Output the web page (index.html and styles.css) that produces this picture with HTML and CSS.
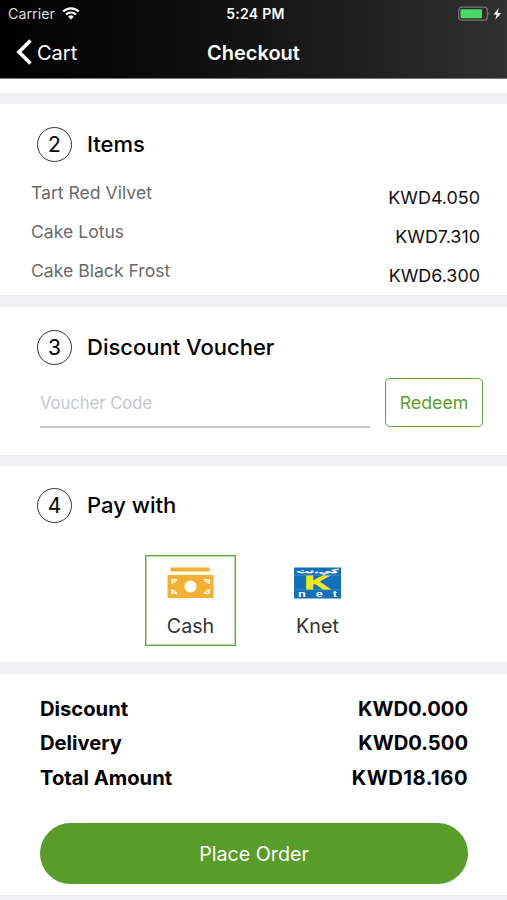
FILE: index.html
```html
<!DOCTYPE html>
<html lang="en">
<head>
<meta charset="utf-8">
<title>Checkout</title>
<link rel="stylesheet" href="styles.css">
</head>
<body>
<header class="topbar">
  <div class="status">
    <div class="carrier"><span>Carrier</span>
      <svg class="wifi" width="18" height="13" viewBox="0 0 18 13"><g fill="none" stroke="#fff" stroke-width="2.1"><path d="M1.2 4.6a11 11 0 0 1 15.6 0"/><path d="M4 7.500a7.100 7.100 0 0 1 10 0"/></g><path d="M9 12.500L6.100 9.700a4.200 4.200 0 0 1 5.800 0z" fill="#fff"/></svg>
    </div>
    <div class="time">5:24 PM</div>
    <div class="power">
      <svg width="44" height="16" viewBox="0 0 44 16"><rect x=".7" y="1.200" width="28.600" height="13" rx="3" fill="none" stroke="#777" stroke-width="1.200"/><rect x="2.500" y="3.200" width="21.500" height="9" rx="1" fill="#4cd964"/><path d="M30.700 5.500q1.700 2.200 0 4.500z" fill="#777"/><path d="M40.800 2L35.500 8.600h3.300L37.200 13.800 43.200 6.900H39.700z" fill="#fff"/></svg>
    </div>
  </div>
  <nav class="nav">
    <a class="back"><svg width="16" height="27" viewBox="0 0 16 27"><path d="M14.500 1.500L3 13 14.500 24.500" fill="none" stroke="#fff" stroke-width="3.700"/></svg><span>Cart</span></a>
    <h1>Checkout</h1>
  </nav>
</header>
<main>
  <section class="items">
    <h2><b>2</b><span>Items</span></h2>
    <div class="row"><span>Tart Red Vilvet</span><em>KWD4.050</em></div>
    <div class="row"><span>Cake Lotus</span><em>KWD7.310</em></div>
    <div class="row"><span>Cake Black Frost</span><em>KWD6.300</em></div>
  </section>
  <section class="voucher">
    <h2><b>3</b><span>Discount Voucher</span></h2>
    <div class="redeem-row">
      <div class="field"><span>Voucher Code</span></div>
      <button class="redeem"><span>Redeem</span></button>
    </div>
  </section>
  <section class="pay">
    <h2><b>4</b><span>Pay with</span></h2>
    <div class="methods">
      <div class="method selected">
        <svg width="47" height="32" viewBox="0 0 47 32"><path d="M4.500 .5h37q1 0 1 1v2q0 1-1 1h-37q-1 0-1-1v-2q0-1 1-1zM1 8h45q.5 0 .5.500v22q0 .5-.5.500H1q-.5 0-.5-.500v-22Q.5 8 1 8z" fill="#f2b034"/><circle cx="23.500" cy="19.500" r="6" fill="#fff"/><path d="M4 12h6.500q-1.500 4-6.500 5zM43 12h-6.500q1.500 4 6.500 5zM4 27h6.500q-1.500-4-6.500-5zM43 27h-6.500q1.500-4 6.500-5z" fill="#fff"/><path d="M5.500 12.500l3 3M41.500 12.500l-3 3M5.500 26.500l3-3M41.500 26.500l-3-3" stroke="#f2b034" stroke-width="1"/></svg>
        <span>Cash</span>
      </div>
      <div class="method">
        <svg width="47" height="32" viewBox="0 0 47 32"><rect width="47" height="31" y=".5" fill="#1270b8"/><path d="M0 8.300h47M0 22.800h47" stroke="#4b94c8" stroke-width=".7"/><text class="arabic" transform="translate(23.500 6) scale(1.900 .85)" text-anchor="middle">كي.نت</text><text class="k" transform="translate(23 21.800) scale(1.950 1)" text-anchor="middle">K</text><text class="net" transform="translate(4 29.600) scale(1.350 1)" textLength="29" lengthAdjust="spacing">net</text></svg>
        <span>Knet</span>
      </div>
    </div>
  </section>
  <section class="summary">
    <dl>
      <div><dt>Discount</dt><dd>KWD0.000</dd></div>
      <div><dt>Delivery</dt><dd>KWD0.500</dd></div>
      <div><dt>Total Amount</dt><dd class="total">KWD18.160</dd></div>
    </dl>
    <button class="place"><span>Place Order</span></button>
  </section>
</main>
</body>
</html>
```
FILE: styles.css
```css
* { box-sizing: border-box; }
body { margin: 0; height: 900px; overflow: hidden; background: #efeff4; font-family: Inter, "Liberation Sans", sans-serif; color: #000; }
.topbar { height: 79px; background: linear-gradient(90deg, #000, #111 45%, #303030); color: #fff; border-bottom: 1px solid #777; }
.status { display: grid; grid-template-columns: 1fr auto 1fr; align-items: center; height: 27px; font-size: 14.300px; line-height: 27px; }
.carrier { display: flex; align-items: center; gap: 7px; padding-left: 8px; color: #ddd; }
.time { padding-left: 4px; font-weight: 600; font-size: 14px; letter-spacing: .3px; }
.power { display: flex; justify-content: flex-end; padding-right: 5px; }
.nav { display: grid; grid-template-columns: 1fr auto 1fr; height: 51px; align-items: center; }
.back { display: flex; align-items: center; gap: 5px; padding-left: 16px; font-size: 20px; }
h1 { margin: 0; font-size: 20px; font-weight: 600; }
main { display: flex; flex-direction: column; gap: 11.500px; padding-top: 25px; background: linear-gradient(#fff 0 14px, #efeff4 14px); }
section { background: #fff; }
h2 { display: flex; align-items: center; gap: 15px; margin: 0; padding-left: 37px; height: 35px; font-size: 22px; font-weight: 500; }
h2 span { padding-bottom: 1px; }
h2 b { display: flex; align-items: center; justify-content: center; width: 35px; height: 35px; border: 1.500px solid #333; border-radius: 50%; font-size: 21px; font-weight: 400; }
.items { height: 191px; padding-top: 23px; }
.items h2 { margin-bottom: 20px; }
.row { display: flex; justify-content: space-between; height: 39px; padding: 0 27px 0 31px; font-size: 17.600px; line-height: 22px; }
.row span { color: #6a6a6a; }
.row em { font-style: normal; font-size: 17.900px; padding-top: 5px; color: #111; }
.voucher { height: 148px; padding-top: 23px; }
.redeem-row { display: flex; gap: 15px; margin: 13px 24px 0 40px; }
.field { flex: 1; height: 50px; padding-top: 14px; border-bottom: 2px solid #c4c4c4; color: #c7c7cc; font-size: 16.600px; line-height: 22px; }
button { font-family: inherit; padding: 0; }
.redeem { width: 98px; height: 49px; border: 1.500px solid #5fa63a; border-radius: 5px; background: #fff; color: #5a9e2b; font-size: 17.800px; }
.pay { height: 196px; padding-top: 22px; }
.methods { display: flex; gap: 36px; margin: 32px 0 0 145px; }
.method { display: flex; flex-direction: column; align-items: center; width: 91px; height: 91px; padding-top: 11px; border: 1px solid transparent; color: #333; font-size: 19.700px; line-height: 24px; }
.method span { margin-top: 15px; }
.method.selected { border: 1px solid #62a83e; box-shadow: inset 0 0 0 1px #b9dba6; }
.arabic { font: bold 6.500px "DejaVu Sans", sans-serif; fill: #fff; stroke: #fff; stroke-width: .3px; }
.k { font: bold 17.500px "Liberation Sans", sans-serif; fill: #f5e51b; stroke: #f5e51b; stroke-width: 1px; }
.net { font: bold 9.500px "Liberation Sans", sans-serif; fill: #fff; }
.summary { height: 221px; padding-top: 18px; }
dl { margin: 0 39px 0 40px; font-size: 20.200px; font-weight: 700; }
dl div { display: flex; justify-content: space-between; height: 34.500px; line-height: 34.500px; }
dt, dd { margin: 0; }
.total { letter-spacing: .5px; }
.place { display: block; width: 428px; height: 61px; margin: 28px 0 0 40px; border: 0; border-radius: 31px; background: #589c29; color: #fff; font-size: 19.700px; }
```
